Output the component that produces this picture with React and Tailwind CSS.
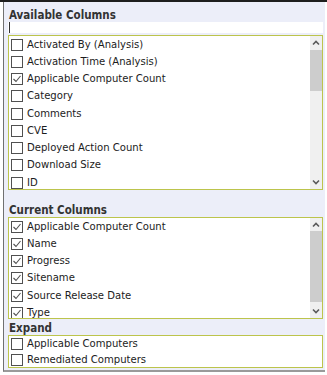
import React from "react";

const FONT = "font-['DejaVu_Sans_Condensed','DejaVu_Sans',sans-serif]";

function Check({ checked }) {
  return (
    <span className="w-[12px] h-[12px] border border-[#505050] bg-white shrink-0 flex items-center justify-center">
      {checked && (
        <svg width="10" height="10" viewBox="0 0 10 10">
          <path d="M1.5 5 L4 7.5 L8.5 2" stroke="#505050" strokeWidth="1.1" fill="none" />
        </svg>
      )}
    </span>
  );
}

function Row({ label, checked, h = "h-[17.25px]" }) {
  return (
    <div className={`${h} shrink-0 flex items-center pl-[2px] gap-[4px] text-[11.2px] text-[#1c1c1c] whitespace-nowrap`}>
      <Check checked={checked} />
      <span className="pt-[1px]">{label}</span>
    </div>
  );
}

function Chevron({ up }) {
  return (
    <svg width="8" height="6" viewBox="0 0 8 6">
      <path d={up ? "M1 4.5 L4 1.5 L7 4.5" : "M1 1.5 L4 4.5 L7 1.5"} stroke="#5a5a5a" strokeWidth="1.6" fill="none" />
    </svg>
  );
}

function Scrollbar({ upH, thumbH }) {
  return (
    <div className="w-[12px] shrink-0 bg-[#f0f0f0] flex flex-col">
      <div className={`${upH} flex items-center justify-center shrink-0`}>
        <Chevron up />
      </div>
      <div className={`${thumbH} bg-[#cdcdcd] shrink-0`} />
      <div className="flex-1" />
      <div className="h-[14px] flex items-center justify-center shrink-0">
        <Chevron />
      </div>
    </div>
  );
}

const available = [
  ["Activated By (Analysis)", false],
  ["Activation Time (Analysis)", false],
  ["Applicable Computer Count", true],
  ["Category", false],
  ["Comments", false],
  ["CVE", false],
  ["Deployed Action Count", false],
  ["Download Size", false],
  ["ID", false],
];

const current = [
  ["Applicable Computer Count", true],
  ["Name", true],
  ["Progress", true],
  ["Sitename", true],
  ["Source Release Date", true],
  ["Type", true],
];

export default function App() {
  return (
    <div className={`w-[327px] h-[375px] bg-white border-t-2 border-[#1e1e1e] ${FONT}`}>
      <div className="ml-[3px] w-[322px] h-[370px] bg-[#eceef9] border-l border-b-2 border-l-[#707070] border-b-[#9a9a9a] pl-[4px] flex flex-col">
        <div className="h-[20px] shrink-0 flex items-end pl-[1px] text-[11.5px] font-bold text-[#333] leading-[14px]">
          Available Columns
        </div>
        <div className="h-[11px] w-[315px] bg-white shrink-0 flex items-center pl-[1px]">
          <span className="w-px h-[11px] bg-[#333]" />
        </div>
        <div className="h-[2px] shrink-0" />
        <div className="h-[155px] w-[315px] border border-[#bcc44c] bg-white shrink-0 flex">
          <div className="flex-1 flex flex-col overflow-hidden">
            {available.map(([l, c]) => (
              <Row key={l} label={l} checked={c} />
            ))}
          </div>
          <Scrollbar upH="h-[14px]" thumbH="h-[41px]" />
        </div>
        <div className="h-[27px] shrink-0 flex items-end pl-[1px] text-[11.5px] font-bold text-[#333] leading-[14px]">
          Current Columns
        </div>
        <div className="h-[102px] w-[315px] border border-[#bcc44c] bg-white shrink-0 flex">
          <div className="flex-1 flex flex-col overflow-hidden">
            {current.map(([l, c]) => (
              <Row key={l} label={l} checked={c} />
            ))}
          </div>
          <Scrollbar upH="h-[13px]" thumbH="h-[71px]" />
        </div>
        <div className="h-[16px] shrink-0 flex items-end pl-[1px] text-[11.5px] font-bold text-[#333] leading-[14px]">
          Expand
        </div>
        <div className="h-[33px] w-[315px] border border-[#bcc44c] bg-white shrink-0 flex flex-col">
          <Row label="Applicable Computers" h="h-[16px]" />
          <Row label="Remediated Computers" h="h-[15px]" />
        </div>
      </div>
    </div>
  );
}
